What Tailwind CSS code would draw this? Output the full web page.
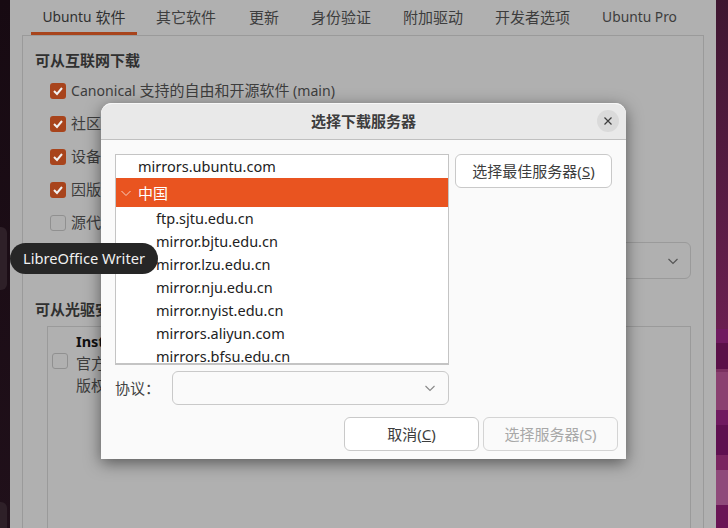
<!DOCTYPE html>
<html lang="zh-CN">
<head>
    <meta charset="UTF-8">
    <title>选择下载服务器</title>
    <script src="https://cdn.jsdelivr.net/npm/@tailwindcss/browser@4"></script>
</head>
<body class="w-[728px] h-[528px] overflow-hidden relative flex font-['Noto_Sans','Noto_Sans_CJK_SC',sans-serif] text-[15px] text-[#3d3d3d]">
    <!-- desktop edge with dock -->
    <div class="w-[10px] h-full bg-gradient-to-b from-[#170a12] to-[#20101a] relative">
        <div class="absolute left-0 top-[227px] w-[7px] h-[63px] rounded-r-[6px] bg-[#2e2028]"></div>
        <div class="absolute left-0 top-[502px] w-[7px] h-[26px] rounded-tr-[6px] bg-[#2e2028]"></div>
    </div>

    <!-- dimmed parent window -->
    <div class="w-[706px] h-full bg-[#b0b0b0] flex flex-col">
        <div class="h-[36px] mx-[12px] border-b border-[#9a9a9a] flex items-end">
            <div class="h-[35px] w-[106px] ml-[9px] pt-[2px] border-b-[3px] border-[#a8441c] flex items-center justify-center text-[#303030]"><span class="text-[13.8px] mr-[4px]">Ubuntu</span>软件</div>
            <div class="h-[35px] w-[90px] ml-[4px] flex items-center justify-center">其它软件</div>
            <div class="h-[35px] w-[60px] ml-[3px] flex items-center justify-center">更新</div>
            <div class="h-[35px] w-[90px] ml-[2px] flex items-center justify-center">身份验证</div>
            <div class="h-[35px] w-[90px] ml-[2px] flex items-center justify-center">附加驱动</div>
            <div class="h-[35px] w-[105px] ml-[2px] flex items-center justify-center">开发者选项</div>
            <div class="h-[35px] w-[95px] ml-[7px] flex items-center justify-center text-[13.8px]">Ubuntu Pro</div>
        </div>
        <div class="flex-1 mx-[12px] border-x border-[#9a9a9a] px-[12px] relative">
            <h2 class="mt-[13px] font-bold text-[#303030]">可从互联网下载</h2>
            <div class="mt-[11px] pl-[15px] flex flex-col gap-[17px]">
                <label class="flex items-center gap-[5px] h-[16px]"><span class="w-[16px] h-[16px] rounded-[3px] bg-[#a8441c] flex items-center justify-center"><svg width="12" height="12" viewBox="0 0 12 12" fill="none" stroke="#f2f2f2" stroke-width="2"><path d="M2 6l3 3 5-6"/></svg></span><span><span class="text-[14.1px]">Canonical </span>支持的自由和开源软件<span class="text-[14.1px]"> (main)</span></span></label>
                <label class="flex items-center gap-[5px] h-[16px]"><span class="w-[16px] h-[16px] rounded-[3px] bg-[#a8441c] flex items-center justify-center"><svg width="12" height="12" viewBox="0 0 12 12" fill="none" stroke="#f2f2f2" stroke-width="2"><path d="M2 6l3 3 5-6"/></svg></span>社区</label>
                <label class="flex items-center gap-[5px] h-[16px]"><span class="w-[16px] h-[16px] rounded-[3px] bg-[#a8441c] flex items-center justify-center"><svg width="12" height="12" viewBox="0 0 12 12" fill="none" stroke="#f2f2f2" stroke-width="2"><path d="M2 6l3 3 5-6"/></svg></span>设备</label>
                <label class="flex items-center gap-[5px] h-[16px]"><span class="w-[16px] h-[16px] rounded-[3px] bg-[#a8441c] flex items-center justify-center"><svg width="12" height="12" viewBox="0 0 12 12" fill="none" stroke="#f2f2f2" stroke-width="2"><path d="M2 6l3 3 5-6"/></svg></span>因版</label>
                <label class="flex items-center gap-[5px] h-[16px]"><span class="w-[16px] h-[16px] rounded-[3px] border border-[#909090]"></span>源代</label>
            </div>
            <div class="absolute left-[100px] right-[12px] top-[206px] h-[37px] rounded-[6px] border border-[#9a9a9a] flex items-center justify-end pr-[11px]">
                <svg width="12" height="12" viewBox="0 0 12 12" fill="none" stroke="#555" stroke-width="1.2"><path d="M1.5 4l4.5 4.5 4.5-4.5"/></svg>
            </div>
            <h2 class="mt-[67px] font-bold text-[#303030]">可从光驱安装</h2>
            <div class="absolute left-[24px] right-[12px] top-[290px] bottom-0 border border-b-0 border-[#9a9a9a] flex pl-[4px]">
                <span class="mt-[26px] w-[16px] h-[16px] rounded-[3px] border border-[#909090]"></span>
                <div class="ml-[8px] mt-[3px] leading-[22px]"><div class="font-bold text-[#111] text-[14.5px]">Inst</div><div>官方</div><div>版权</div></div>
            </div>
        </div>
    </div>

    <!-- wallpaper strip on the right -->
    <div class="w-[12px] h-full flex flex-col">
        <div class="h-[329px] bg-gradient-to-b from-[#3e1630] to-[#6a1f50]"></div>
        <div class="h-[14px] bg-[#701a60]"></div>
        <div class="h-[26px] bg-[#5a1048]"></div>
        <div class="h-[3px] bg-[#7a3060]"></div>
        <div class="h-[38px] bg-[#8a4070]"></div>
        <div class="h-[15px] bg-[#701a60]"></div>
        <div class="h-[30px] bg-[#5f1050]"></div>
        <div class="h-[15px] bg-[#7a2560]"></div>
        <div class="h-[35px] bg-[#8f4a7a]"></div>
        <div class="h-[23px] bg-[#6a1555]"></div>
    </div>

    <!-- dialog -->
    <div class="absolute left-[101px] top-[103px] w-[525px] h-[356px] bg-[#fafafa] rounded-t-[11px] shadow-[0_4px_16px_rgba(0,0,0,0.5)] flex flex-col">
        <div class="h-[37px] bg-[#e9e9e9] border-t border-t-[#f7f7f7] border-b border-b-[#c0c0c0] rounded-t-[11px] relative flex items-center justify-center font-bold text-[#3d3d3d]">
            选择下载服务器
            <button class="absolute right-[7px] top-[6px] w-[22px] h-[22px] rounded-full bg-[#dadada] flex items-center justify-center">
                <svg width="10" height="10" viewBox="0 0 10 10" fill="none" stroke="#3d3d3d" stroke-width="1.2"><path d="M1.5 1.5l7 7M8.5 1.5l-7 7"/></svg>
            </button>
        </div>
        <div class="flex-1 pt-[14px] px-[14px] flex flex-col">
            <div class="flex gap-[6px]">
                <div class="w-[334px]">
                    <ul class="w-[334px] h-[211px] bg-white border border-[#c4c4c4] border-b-2 overflow-hidden text-[#222] text-[14.5px]">
                        <li class="h-[23px] pl-[22px] flex items-center">mirrors.ubuntu.com</li>
                        <li class="h-[29px] pl-[4px] pt-[1px] bg-[#e95420] text-white text-[15px] flex items-center">
                            <svg class="w-[12px] h-[12px] mr-[6px]" viewBox="0 0 12 12" fill="none" stroke="#f8d0c0" stroke-width="1"><path d="M1.5 4l4.5 4.5 4.5-4.5"/></svg>中国
                        </li>
                        <li class="h-[23px] pl-[40px] flex items-center">ftp.sjtu.edu.cn</li>
                        <li class="h-[23px] pl-[40px] flex items-center">mirror.bjtu.edu.cn</li>
                        <li class="h-[23px] pl-[40px] flex items-center">mirror.lzu.edu.cn</li>
                        <li class="h-[23px] pl-[40px] flex items-center">mirror.nju.edu.cn</li>
                        <li class="h-[23px] pl-[40px] flex items-center">mirror.nyist.edu.cn</li>
                        <li class="h-[23px] pl-[40px] flex items-center">mirrors.aliyun.com</li>
                        <li class="h-[23px] pl-[40px] flex items-center">mirrors.bfsu.edu.cn</li>
                    </ul>
                    <div class="mt-[6px] flex items-center">
                        <span class="w-[57px] text-[#444]">协议：</span>
                        <div class="w-[277px] h-[34px] rounded-[6px] border border-[#c9c9c9] flex items-center justify-end pr-[12px]">
                            <svg width="12" height="12" viewBox="0 0 12 12" fill="none" stroke="#888" stroke-width="1.1"><path d="M1.5 4l4.5 4.5 4.5-4.5"/></svg>
                        </div>
                    </div>
                </div>
                <button class="w-[157px] h-[34px] rounded-[6px] border border-[#c9c9c9] bg-white text-[#3d3d3d]">选择最佳服务器(<u>S</u>)</button>
            </div>
            <div class="mt-[12px] flex justify-end gap-[4px] -mr-[6px]">
                <button class="w-[135px] h-[34px] rounded-[6px] border border-[#c9c9c9] bg-white text-[#3d3d3d]">取消(<u>C</u>)</button>
                <button class="w-[135px] h-[34px] rounded-[6px] border border-[#d4d4d4] bg-[#fafafa] text-[#a8a8a8]">选择服务器(S)</button>
            </div>
        </div>
    </div>

    <!-- dock tooltip -->
    <div class="absolute left-[10px] top-[243px] w-[148px] h-[31px] rounded-full bg-[#262626] text-[#f0f0f0] text-[14.7px] flex items-center justify-center">LibreOffice Writer</div>
</body>
</html>
